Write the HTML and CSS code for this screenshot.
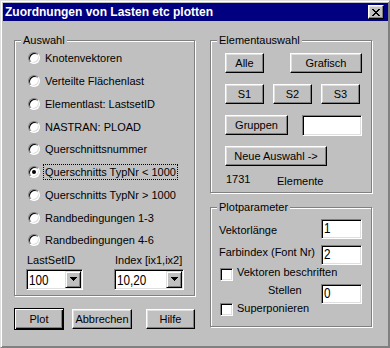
FILE: index.html
```html
<!DOCTYPE html>
<html lang="de">
<head>
  <meta charset="UTF-8">
  <title>Zuordnungen von Lasten etc plotten</title>
  <link rel="stylesheet" href="styles.css">
</head>
<body>
  <div class="window">
    <!-- Titelleiste -->
    <div class="titlebar">
      <span class="title">Zuordnungen von Lasten etc plotten</span>
      <button class="close-btn" type="button">
        <svg width="8" height="7" viewBox="0 0 8 7" shape-rendering="crispEdges">
          <path fill="#000" d="M0 0h2v1H0zM6 0h2v1H6zM1 1h2v1H1zM5 1h2v1H5zM2 2h4v1H2zM3 3h2v1H3zM2 4h4v1H2zM1 5h2v1H1zM5 5h2v1H5zM0 6h2v1H0zM6 6h2v1H6z"/>
        </svg>
      </button>
    </div>

    <div class="dialog">
      <!-- linke Spalte -->
      <div class="col-left">
        <div class="group group-auswahl">
          <span class="group-title">Auswahl</span>
          <div class="radio-list">
            <div class="radio"><span class="radio-box"></span><span class="radio-text">Knotenvektoren</span></div>
            <div class="radio"><span class="radio-box"></span><span class="radio-text">Verteilte Flächenlast</span></div>
            <div class="radio"><span class="radio-box"></span><span class="radio-text">Elementlast: LastsetID</span></div>
            <div class="radio"><span class="radio-box"></span><span class="radio-text">NASTRAN: PLOAD</span></div>
            <div class="radio"><span class="radio-box"></span><span class="radio-text">Querschnittsnummer</span></div>
            <div class="radio"><span class="radio-box checked"></span><span class="radio-text focused">Querschnitts TypNr &lt; 1000</span></div>
            <div class="radio"><span class="radio-box"></span><span class="radio-text">Querschnitts TypNr &gt; 1000</span></div>
            <div class="radio"><span class="radio-box"></span><span class="radio-text">Randbedingungen 1-3</span></div>
            <div class="radio"><span class="radio-box"></span><span class="radio-text">Randbedingungen 4-6</span></div>
          </div>
          <div class="combo-row">
            <div class="combo-field combo-lastset">
              <div class="combo-label">LastSetID</div>
              <div class="combo">
                <span class="combo-value"><span class="field-text">100</span></span>
                <span class="combo-btn">
                  <svg width="7" height="4" viewBox="0 0 7 4" shape-rendering="crispEdges"><path fill="#000" d="M0 0h7v1H0zM1 1h5v1H1zM2 2h3v1H2zM3 3h1v1H3z"/></svg>
                </span>
              </div>
            </div>
            <div class="combo-field combo-index">
              <div class="combo-label">Index [ix1,ix2]</div>
              <div class="combo">
                <span class="combo-value"><span class="field-text">10,20</span></span>
                <span class="combo-btn">
                  <svg width="7" height="4" viewBox="0 0 7 4" shape-rendering="crispEdges"><path fill="#000" d="M0 0h7v1H0zM1 1h5v1H1zM2 2h3v1H2zM3 3h1v1H3z"/></svg>
                </span>
              </div>
            </div>
          </div>
        </div>

        <div class="button-row">
          <button class="btn btn-default btn-plot" type="button">Plot</button>
          <button class="btn btn-abbrechen" type="button">Abbrechen</button>
          <button class="btn btn-hilfe" type="button">Hilfe</button>
        </div>
      </div>

      <!-- rechte Spalte -->
      <div class="col-right">
        <div class="group group-element">
          <span class="group-title">Elementauswahl</span>
          <div class="erow erow-1">
            <button class="btn btn-alle" type="button">Alle</button>
            <button class="btn btn-grafisch" type="button">Grafisch</button>
          </div>
          <div class="erow erow-2">
            <button class="btn btn-s" type="button">S1</button>
            <button class="btn btn-s" type="button">S2</button>
            <button class="btn btn-s" type="button">S3</button>
          </div>
          <div class="erow erow-3">
            <button class="btn btn-gruppen" type="button">Gruppen</button>
            <span class="edit edit-gruppen"></span>
          </div>
          <div class="erow erow-4">
            <button class="btn btn-neue" type="button">Neue Auswahl -&gt;</button>
          </div>
          <div class="erow erow-5">
            <span class="count">1731</span>
            <span class="count-label">Elemente</span>
          </div>
        </div>

        <div class="group group-plot">
          <span class="group-title">Plotparameter</span>
          <div class="prow prow-vektor">
            <span class="plabel">Vektorlänge</span>
            <span class="edit edit-small"><span class="field-text">1</span></span>
          </div>
          <div class="prow prow-farb">
            <span class="plabel">Farbindex (Font Nr)</span>
            <span class="edit edit-small"><span class="field-text">2</span></span>
          </div>
          <div class="check check-vektoren">
            <span class="check-box"></span>
            <span class="check-text">Vektoren beschriften</span>
          </div>
          <div class="prow prow-stellen">
            <span class="plabel">Stellen</span>
            <span class="edit edit-small"><span class="field-text">0</span></span>
          </div>
          <div class="check check-super">
            <span class="check-box"></span>
            <span class="check-text">Superponieren</span>
          </div>
        </div>
      </div>
    </div>
  </div>
</body>
</html>
```

FILE: styles.css
```css
/* Grundlayout: Windows-95-Dialog */
* { box-sizing: border-box; }
html, body { margin: 0; }
body {
  width: 390px;
  height: 348px;
  overflow: hidden;
  background: #c0c0c0;
  font-family: "Liberation Sans", Arial, sans-serif;
  font-size: 11px;
  color: #000;
}
button {
  font: inherit;
  color: #000;
  padding: 0;
  margin: 0;
}
.window {
  width: 390px;
  height: 348px;
  border: 1px solid;
  border-color: #dfdfdf #808080 #808080 #dfdfdf;
  box-shadow: inset 1px 1px #fff, inset -1px -1px #808080;
  padding: 2px 1px 1px 2px;
  background: #c0c0c0;
}

/* Titelleiste */
.titlebar {
  height: 18px;
  background: #000080;
  color: #fff;
  display: flex;
  align-items: center;
  justify-content: space-between;
  padding: 0 4px 0 2px;
}
.title {
  font-weight: bold;
  font-size: 12px;
  line-height: 18px;
}
.close-btn {
  width: 16px;
  height: 14px;
  background: #c0c0c0;
  border: 1px solid;
  border-color: #fff #000 #000 #fff;
  box-shadow: inset -1px -1px #808080, inset 1px 1px #dfdfdf;
  display: flex;
  align-items: center;
  justify-content: center;
}
.close-btn svg { display: block; margin: 0 1px 0 0; }

/* Dialoginhalt */
.dialog {
  display: flex;
  gap: 15px;
  padding: 19px 0 0 11px;
}
.col-left { width: 181px; }
.col-right { width: 162px; }

/* Gruppenrahmen (geätzt) */
.group {
  position: relative;
  border: 1px solid #808080;
  box-shadow: inset 1px 1px #fff, 1px 1px #fff;
}
.group-title {
  position: absolute;
  top: -7px;
  left: 6px;
  padding: 0 2px;
  line-height: 13px;
  background: #c0c0c0;
}
.group-auswahl { height: 256px; }
.group-element { height: 153px; padding: 12px 0 0 14px; }
.group-plot { height: 120px; margin-top: 14px; padding: 11px 0 0 8px; }

/* Optionsfelder */
.radio-list { padding: 6px 0 0 13px; }
.radio {
  height: 22.75px;
  display: flex;
  align-items: center;
}
.radio-box {
  position: relative;
  width: 12px;
  height: 12px;
  border-radius: 50%;
  border: 1px solid;
  border-color: #808080 #fff #fff #808080;
  background: #fff;
  box-shadow: inset 1px 1px #000, inset -1px -1px #dfdfdf;
  flex: none;
}
.radio-box.checked::after {
  content: "";
  position: absolute;
  left: 3px;
  top: 3px;
  width: 4px;
  height: 4px;
  border-radius: 50%;
  background: #000;
}
.radio-text {
  margin-left: 3px;
  padding: 1px;
  line-height: 12px;
  border: 1px dotted transparent;
}
.radio-text.focused { border-color: #000; }

/* Kombinationsfelder */
.combo-row {
  display: flex;
  gap: 31px;
  padding: 2px 0 0 11px;
}
.combo-label {
  line-height: 13px;
  padding-left: 1px;
  margin-bottom: 2px;
}
.combo {
  display: flex;
  height: 21px;
  padding: 1px;
  border: 1px solid;
  border-color: #808080 #fff #fff #808080;
  box-shadow: inset 1px 1px #000, inset -1px -1px #dfdfdf;
  background: #fff;
}
.combo-lastset .combo { width: 57px; }
.combo-index .combo { width: 70px; }
.combo-value {
  flex: 1;
  padding-left: 1px;
  line-height: 17px;
}
.combo-btn {
  width: 16px;
  height: 17px;
  background: #c0c0c0;
  border: 1px solid;
  border-color: #dfdfdf #000 #000 #dfdfdf;
  box-shadow: inset 1px 1px #fff, inset -1px -1px #808080;
  display: flex;
  align-items: center;
  justify-content: center;
}
.combo-btn svg { display: block; }

/* hohe, schmale Schrift der Eingabefelder */
.field-text {
  display: inline-block;
  font-size: 15px;
  transform: scaleX(0.78);
  transform-origin: left center;
}

/* Schaltflächen */
.btn {
  height: 20px;
  background: #c0c0c0;
  border: 1px solid;
  border-color: #fff #000 #000 #fff;
  box-shadow: inset -1px -1px #808080, inset 1px 1px #dfdfdf;
  line-height: 16px;
  text-align: center;
}
.btn-default {
  height: 22px;
  border-color: #000;
  box-shadow: inset 1px 1px #fff, inset -1px -1px #000, inset -2px -2px #808080;
}
.button-row {
  display: flex;
  align-items: flex-start;
  margin-top: 12px;
}
.btn-plot { width: 50px; }
.btn-abbrechen { width: 60px; margin: 1px 0 0 8px; }
.btn-hilfe { width: 49px; margin: 1px 0 0 14px; }

.erow { display: flex; align-items: flex-start; }
.erow-1 { gap: 26px; }
.erow-2 { gap: 9px; margin-top: 11px; }
.erow-3 { gap: 14px; margin-top: 11px; }
.erow-4 { margin-top: 10px; }
.erow-5 { margin-top: 7px; line-height: 13px; }
.btn-alle, .btn-s { width: 39px; }
.btn-grafisch { width: 72px; }
.btn-gruppen { width: 63px; }
.btn-neue { width: 102px; }
.count { width: 51px; margin-left: 1px; }
.count-label { padding-top: 2px; }

/* Eingabefelder */
.edit {
  display: block;
  height: 20px;
  padding: 0 0 0 2px;
  border: 1px solid;
  border-color: #808080 #fff #fff #808080;
  box-shadow: inset 1px 1px #000, inset -1px -1px #dfdfdf;
  background: #fff;
  line-height: 16px;
}
.edit-gruppen { width: 60px; height: 21px; }
.edit-small { width: 41px; }

/* Plotparameter */
.prow { display: flex; align-items: flex-start; }
.plabel { width: 102px; line-height: 13px; }
.prow-vektor .plabel { padding-top: 5px; }
.prow-farb { margin-top: 6px; }
.prow-farb .plabel { padding-top: 1px; }
.prow-stellen { margin-top: 3px; }
.prow-stellen .plabel { padding-left: 49px; }

.check {
  display: flex;
  align-items: flex-start;
  margin-left: 1px;
  height: 13px;
}
.check-vektoren { margin-top: 3px; }
.check-super { margin-top: -1px; }
.check-box {
  width: 13px;
  height: 13px;
  border: 1px solid;
  border-color: #808080 #fff #fff #808080;
  box-shadow: inset 1px 1px #000, inset -1px -1px #dfdfdf;
  background: #fff;
  flex: none;
}
.check-text {
  margin: -2px 0 0 4px;
  line-height: 13px;
}
.check-super .check-text { margin-top: -1px; }
```
